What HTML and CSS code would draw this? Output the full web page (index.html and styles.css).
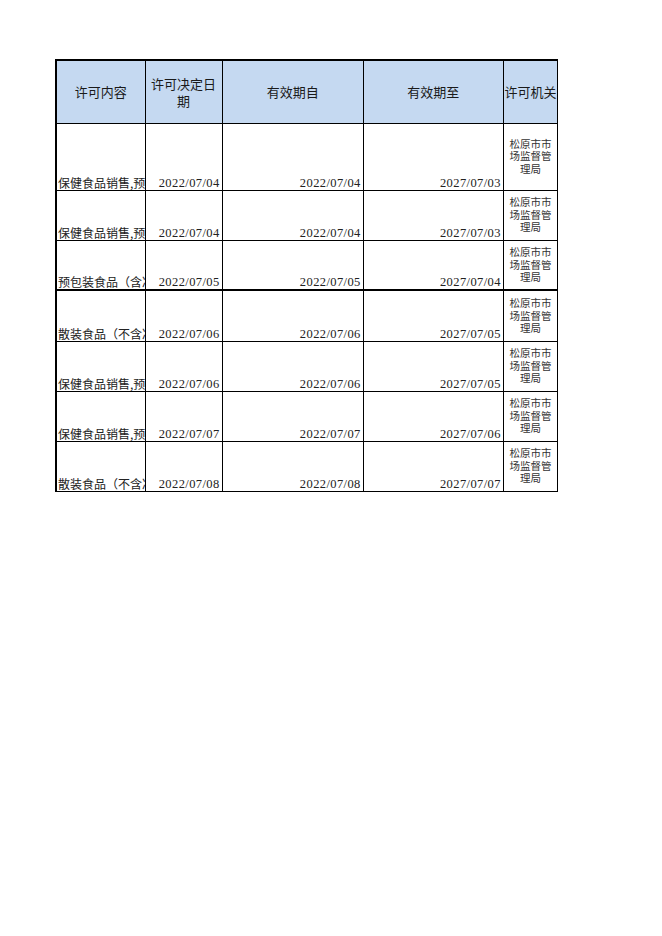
FILE: index.html
```html
<!DOCTYPE html>
<html lang="zh">
<head>
<meta charset="utf-8">
<title>许可信息</title>
<link rel="stylesheet" href="styles.css">
</head>
<body>
<table class="sheet">
  <colgroup>
    <col class="c1"><col class="c2"><col class="c3"><col class="c4"><col class="c5">
  </colgroup>
  <thead>
    <tr class="hrow">
      <th>许可内容</th>
      <th>许可决定日期</th>
      <th>有效期自</th>
      <th>有效期至</th>
      <th>许可机关</th>
    </tr>
  </thead>
  <tbody>
    <tr class="r-first">
      <td class="txt"><div class="clip">保健食品销售,预包装食品（含冷藏冷冻食品）销售</div></td>
      <td class="date">2022/07/04</td>
      <td class="date">2022/07/04</td>
      <td class="date">2027/07/03</td>
      <td class="org"><div class="orgtxt">松原市市场监督管理局</div></td>
    </tr>
    <tr>
      <td class="txt"><div class="clip">保健食品销售,预包装食品（含冷藏冷冻食品）销售</div></td>
      <td class="date">2022/07/04</td>
      <td class="date">2022/07/04</td>
      <td class="date">2027/07/03</td>
      <td class="org"><div class="orgtxt">松原市市场监督管理局</div></td>
    </tr>
    <tr class="r-thick">
      <td class="txt"><div class="clip">预包装食品（含冷藏冷冻食品）销售</div></td>
      <td class="date">2022/07/05</td>
      <td class="date">2022/07/05</td>
      <td class="date">2027/07/04</td>
      <td class="org"><div class="orgtxt">松原市市场监督管理局</div></td>
    </tr>
    <tr class="r-tall">
      <td class="txt"><div class="clip">散装食品（不含冷藏冷冻食品）销售</div></td>
      <td class="date">2022/07/06</td>
      <td class="date">2022/07/06</td>
      <td class="date">2027/07/05</td>
      <td class="org"><div class="orgtxt">松原市市场监督管理局</div></td>
    </tr>
    <tr>
      <td class="txt"><div class="clip">保健食品销售,预包装食品（含冷藏冷冻食品）销售</div></td>
      <td class="date">2022/07/06</td>
      <td class="date">2022/07/06</td>
      <td class="date">2027/07/05</td>
      <td class="org"><div class="orgtxt">松原市市场监督管理局</div></td>
    </tr>
    <tr>
      <td class="txt"><div class="clip">保健食品销售,预包装食品（含冷藏冷冻食品）销售</div></td>
      <td class="date">2022/07/07</td>
      <td class="date">2022/07/07</td>
      <td class="date">2027/07/06</td>
      <td class="org"><div class="orgtxt">松原市市场监督管理局</div></td>
    </tr>
    <tr>
      <td class="txt"><div class="clip">散装食品（不含冷藏冷冻食品）销售</div></td>
      <td class="date">2022/07/08</td>
      <td class="date">2022/07/08</td>
      <td class="date">2027/07/07</td>
      <td class="org"><div class="orgtxt">松原市市场监督管理局</div></td>
    </tr>
  </tbody>
</table>
</body>
</html>
```
FILE: styles.css
```css
html, body {
  margin: 0;
  padding: 0;
  background: #ffffff;
}
body {
  padding: 59px 0 0 55px;
}
.sheet {
  border-collapse: collapse;
  table-layout: fixed;
  width: 503px;
  border-top: 2px solid #000;
  border-left: 2px solid #000;
  border-right: 1px solid #000;
}
.c1 { width: 89px; }
.c2 { width: 77px; }
.c3 { width: 141px; }
.c4 { width: 140px; }
.c5 { width: 54px; }

.sheet th,
.sheet td {
  border: 1px solid #000;
  padding: 0;
  overflow: hidden;
}
.hrow {
  height: 63px;
}
.hrow th {
  background: #c5d9f1;
  font-family: "Noto Sans CJK SC", sans-serif;
  font-weight: normal;
  font-size: 13px;
  line-height: 17px;
  color: #1a1a1a;
  text-align: center;
  vertical-align: middle;
}
.sheet tbody tr {
  height: 50px;
}
.sheet tbody tr.r-first {
  height: 67px;
}
.sheet tbody tr.r-tall {
  height: 51px;
}
.sheet tbody tr.r-thick td {
  border-bottom: 2px solid #000;
}
.sheet td.txt {
  vertical-align: bottom;
  padding-left: 1px;
}
.clip {
  white-space: nowrap;
  overflow: hidden;
  font-family: "Noto Sans CJK SC", sans-serif;
  font-size: 12px;
  line-height: 15px;
  color: #222;
}
.sheet td.date {
  vertical-align: bottom;
  text-align: right;
  font-family: "Liberation Serif", serif;
  font-size: 12.5px;
  letter-spacing: 0.4px;
  line-height: 14px;
  color: #222;
  padding-right: 2px;
}
.sheet td.org {
  vertical-align: middle;
  text-align: center;
}
.orgtxt {
  width: 44px;
  margin: 0 auto;
  font-family: "Noto Sans CJK SC", sans-serif;
  font-size: 10.5px;
  line-height: 12.5px;
  color: #333;
  word-break: break-all;
  text-align: center;
}
```
